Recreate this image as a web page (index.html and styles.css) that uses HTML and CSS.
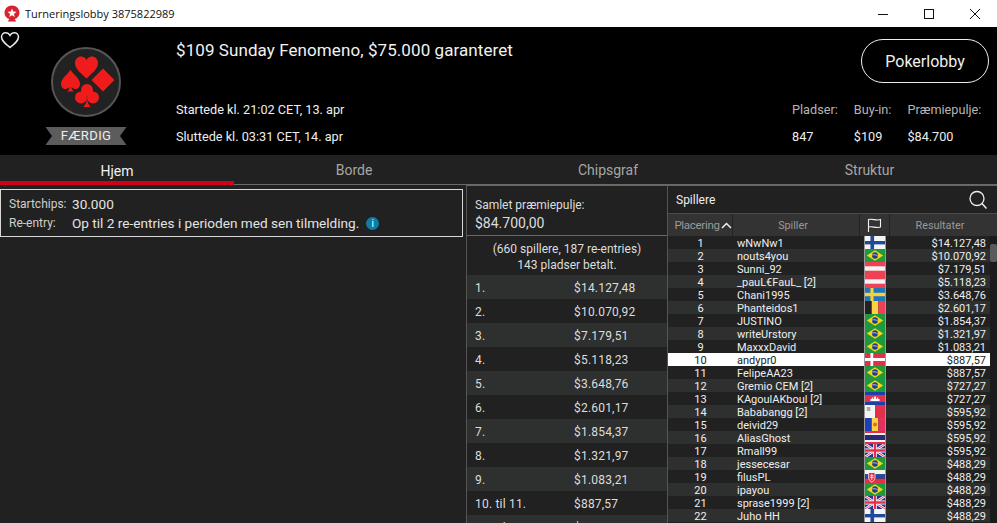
FILE: index.html
```html
<!DOCTYPE html>
<html lang="da">
<head>
<meta charset="utf-8">
<title>Turneringslobby 3875822989</title>
<link rel="stylesheet" href="styles.css">
</head>
<body>
<svg class="defs" width="0" height="0" aria-hidden="true">
  <defs>
    <symbol id="fi" viewBox="0 0 22 13" preserveAspectRatio="none"><rect width="22" height="13" fill="#f4f4f4"/><rect x="6" width="4" height="13" fill="#1f4a9c"/><rect y="5" width="22" height="3.4" fill="#1f4a9c"/></symbol>
    <symbol id="br" viewBox="0 0 22 13" preserveAspectRatio="none"><rect width="22" height="13" fill="#1e9a3c"/><path d="M11 1.2 20 6.5 11 11.8 2 6.5z" fill="#f7d417"/><circle cx="11" cy="6.5" r="3.2" fill="#1d3f8f"/><path d="M8 6c2-.6 4.300-.2 6 1" stroke="#fff" stroke-width=".7" fill="none"/></symbol>
    <symbol id="at" viewBox="0 0 22 13" preserveAspectRatio="none"><rect width="22" height="13" fill="#f4f4f4"/><rect width="22" height="4.300" fill="#ee4155"/><rect y="8.700" width="22" height="4.300" fill="#ee4155"/></symbol>
    <symbol id="se" viewBox="0 0 22 13" preserveAspectRatio="none"><rect width="22" height="13" fill="#1f77b8"/><rect x="6" width="3.400" height="13" fill="#fbcf3a"/><rect y="4.800" width="22" height="3.400" fill="#fbcf3a"/></symbol>
    <symbol id="be" viewBox="0 0 22 13" preserveAspectRatio="none"><rect width="7.400" height="13" fill="#222"/><rect x="7.400" width="7.300" height="13" fill="#fbd13f"/><rect x="14.700" width="7.300" height="13" fill="#ee4155"/></symbol>
    <symbol id="dk" viewBox="0 0 22 13" preserveAspectRatio="none"><rect width="22" height="13" fill="#e3304a"/><rect x="6" width="3" height="13" fill="#fff"/><rect y="5" width="22" height="3" fill="#fff"/></symbol>
    <symbol id="kh" viewBox="0 0 22 13" preserveAspectRatio="none"><rect width="22" height="13" fill="#e3304a"/><rect width="22" height="3" fill="#1f3fa8"/><rect y="10" width="22" height="3" fill="#1f3fa8"/><path d="M6 9V7h1.500V5.500h1.500V7h1V4.500h2V7h1V5.500h1.500V7H16v2z" fill="#fff"/></symbol>
    <symbol id="mt" viewBox="0 0 22 13" preserveAspectRatio="none"><rect width="11" height="13" fill="#f4f4f4"/><rect x="11" width="11" height="13" fill="#e3304a"/><rect x="2" y="2" width="4" height="4" fill="#aaa"/></symbol>
    <symbol id="md" viewBox="0 0 22 13" preserveAspectRatio="none"><rect width="7.400" height="13" fill="#1f3fb8"/><rect x="7.400" width="7.300" height="13" fill="#fbd13f"/><rect x="14.700" width="7.300" height="13" fill="#e3305f"/><circle cx="11" cy="6.500" r="2" fill="#d9671f"/></symbol>
    <symbol id="th" viewBox="0 0 22 13" preserveAspectRatio="none"><rect width="22" height="13" fill="#f4f4f4"/><rect width="22" height="2" fill="#e3304a"/><rect y="4" width="22" height="5" fill="#2a2a6e"/><rect y="11" width="22" height="2" fill="#e3304a"/></symbol>
    <symbol id="gb" viewBox="0 0 22 13" preserveAspectRatio="none"><rect width="22" height="13" fill="#28358a"/><path d="M0 0 22 13M22 0 0 13" stroke="#fff" stroke-width="2.600"/><path d="M0 0 22 13M22 0 0 13" stroke="#e3304a" stroke-width="1"/><path d="M11 0V13M0 6.500H22" stroke="#fff" stroke-width="4"/><path d="M11 0V13M0 6.500H22" stroke="#e3304a" stroke-width="2.400"/></symbol>
    <symbol id="sk" viewBox="0 0 22 13" preserveAspectRatio="none"><rect width="22" height="4.300" fill="#f4f4f4"/><rect y="4.300" width="22" height="4.400" fill="#1f4aa8"/><rect y="8.700" width="22" height="4.300" fill="#e3304a"/><path d="M4 2.500H11V8C11 10 8.500 11.500 7.500 12 6.500 11.500 4 10 4 8z" fill="#e3304a" stroke="#fff" stroke-width=".8"/><path d="M7.500 4V10M6 5.500H9M5.500 7.300H9.500" stroke="#fff" stroke-width=".8"/></symbol>
  </defs>
</svg>

<div class="window">
  <div class="titlebar">
    <svg class="app-logo" width="16" height="17" viewBox="0 0 16 17"><path d="M8 0.500C3.800.5.500 3.600.500 7.800c0 3.100 2 5.500 4.800 6.300L3.800 16.500h8.400l-1.500-2.400c2.800-.8 4.800-3.200 4.800-6.300C15.500 3.600 12.200.5 8 .5z" fill="#d9232e"/><path d="M8 3.500 9.200 6.600 12.500 6.800 9.900 8.900 10.800 12 8 10.200 5.200 12 6.100 8.900 3.500 6.800 6.800 6.600z" fill="#fff"/></svg>
    <span class="title-text">Turneringslobby 3875822989</span>
    <div class="win-controls">
      <svg class="win-btn" width="12" height="12" viewBox="0 0 12 12"><path d="M1 6.500H11" stroke="#111" stroke-width="1"/></svg>
      <svg class="win-btn" width="12" height="12" viewBox="0 0 12 12"><rect x="1.500" y="1.500" width="9" height="9" fill="none" stroke="#111"/></svg>
      <svg class="win-btn" width="12" height="12" viewBox="0 0 12 12"><path d="M1 1 11 11M11 1 1 11" stroke="#111" stroke-width="1"/></svg>
    </div>
  </div>

  <header class="hero">
    <svg class="heart" width="20" height="18" viewBox="0 0 20 18"><path d="M10 16.500C5 12.500 1.500 9.800 1.500 6 1.500 3.500 3.400 1.700 5.600 1.700 7.500 1.700 9 2.700 10 4.500 11 2.700 12.500 1.700 14.400 1.700 16.600 1.700 18.500 3.500 18.500 6 18.500 9.800 15 12.500 10 16.500z" fill="none" stroke="#e8e8e8" stroke-width="1.500"/></svg>
    <div class="badge-col">
      <svg class="suits" width="72" height="72" viewBox="0 0 72 72">
        <circle cx="36" cy="36" r="34" fill="#222" stroke="#555" stroke-width="2"/>
        <path d="M36.500 32.500C29.500 26 25 22.500 25 17 25 13 28 10.500 31 10.500 33.500 10.500 35.500 12 36.500 14 37.500 12 39.500 10.500 42 10.500 45 10.500 48 13 48 17 48 22.500 43.500 26 36.500 32.500z" fill="#f01b1b"/>
        <path d="M20.500 24C17 29 11 32.500 11 38 11 41 13 43 15.500 43 17 43 18.500 42.200 19.500 41 19.300 43 18.500 44.500 17 45.500H24C22.500 44.500 21.700 43 21.500 41 22.500 42.200 24 43 25.500 43 28 43 30 41 30 38 30 32.500 24 29 20.500 24z" fill="#f01b1b"/>
        <path d="M53 22.500 64.500 34 53 45.500 41.500 34z" fill="#f01b1b"/>
        <g fill="#f01b1b">
          <circle cx="37" cy="44" r="6"/>
          <circle cx="31" cy="51.500" r="6"/>
          <circle cx="43" cy="51.500" r="6"/>
          <path d="M37 48C37 55 36 59 33 61H41C38 59 37 55 37 48z"/>
        </g>
      </svg>
      <div class="ribbon">FÆRDIG</div>
    </div>
    <div class="hero-main">
      <h1 class="hero-title">$109 Sunday Fenomeno, $75.000 garanteret</h1>
      <div class="hero-dates">
        <div>Startede kl. 21:02 CET, 13. apr</div>
        <div>Sluttede kl. 03:31 CET, 14. apr</div>
      </div>
    </div>
    <div class="hero-side">
      <button class="lobby-btn">Pokerlobby</button>
      <div class="stats">
        <div class="stat"><span class="stat-label">Pladser:</span><span>847</span></div>
        <div class="stat"><span class="stat-label">Buy-in:</span><span>$109</span></div>
        <div class="stat"><span class="stat-label">Præmiepulje:</span><span>$84.700</span></div>
      </div>
    </div>
  </header>

  <nav class="tabs">
    <div class="tab active">Hjem</div>
    <div class="tab tab-borde">Borde</div>
    <div class="tab tab-chips">Chipsgraf</div>
    <div class="tab tab-struktur">Struktur</div>
  </nav>

  <main class="content">
    <section class="home">
      <div class="info-box">
        <div class="info-row"><span class="info-label">Startchips:</span><span class="info-value">30.000</span></div>
        <div class="info-row"><span class="info-label">Re-entry:</span><span class="info-value">Op til 2 re-entries i perioden med sen tilmelding.</span><span class="info-dot">i</span></div>
      </div>
    </section>

    <section class="prizes">
      <div class="prize-head">
        <div class="prize-head-label">Samlet præmiepulje:</div>
        <div class="prize-head-value">$84.700,00</div>
      </div>
      <div class="prize-summary">
        <div>(660 spillere, 187 re-entries)</div>
        <div>143 pladser betalt.</div>
      </div>
      <div class="prize-row"><span class="prize-place">1.</span><span>$14.127,48</span></div>
      <div class="prize-row"><span class="prize-place">2.</span><span>$10.070,92</span></div>
      <div class="prize-row"><span class="prize-place">3.</span><span>$7.179,51</span></div>
      <div class="prize-row"><span class="prize-place">4.</span><span>$5.118,23</span></div>
      <div class="prize-row"><span class="prize-place">5.</span><span>$3.648,76</span></div>
      <div class="prize-row"><span class="prize-place">6.</span><span>$2.601,17</span></div>
      <div class="prize-row"><span class="prize-place">7.</span><span>$1.854,37</span></div>
      <div class="prize-row"><span class="prize-place">8.</span><span>$1.321,97</span></div>
      <div class="prize-row"><span class="prize-place">9.</span><span>$1.083,21</span></div>
      <div class="prize-row"><span class="prize-place">10. til 11.</span><span>$887,57</span></div>
      <div class="prize-row"><span class="prize-place">12. til 13.</span><span>$727,27</span></div>
    </section>

    <section class="players">
      <div class="players-head">
        <span>Spillere</span>
        <svg width="20" height="20" viewBox="0 0 20 20"><circle cx="9" cy="8.500" r="7" fill="none" stroke="#eee" stroke-width="1.300"/><path d="M14 13.500 18.500 18.500" stroke="#eee" stroke-width="1.500"/></svg>
      </div>
      <div class="cols">
        <div class="col col-place">Placering<svg width="11" height="7" viewBox="0 0 11 7"><path d="M1 6 5.500 1.500 10 6" fill="none" stroke="#eee" stroke-width="1.500"/></svg></div>
        <div class="col col-name">Spiller</div>
        <div class="col col-flag"><svg width="15" height="14" viewBox="0 0 15 14"><path d="M1.500 14V1.500C5 .5 10 3 13.500 1.500V9C10 10.500 5 8 1.500 9" fill="none" stroke="#f2f2f2" stroke-width="1.100"/></svg></div>
        <div class="col col-res">Resultater</div>
      </div>
      <div class="list">
        <div class="rows">
          <div class="row"><span class="c-place">1</span><span class="c-name">wNwNw1</span><svg class="flag"><use href="#fi"/></svg><span class="c-res">$14.127,48</span></div>
          <div class="row"><span class="c-place">2</span><span class="c-name">nouts4you</span><svg class="flag"><use href="#br"/></svg><span class="c-res">$10.070,92</span></div>
          <div class="row"><span class="c-place">3</span><span class="c-name">Sunni_92</span><svg class="flag"><use href="#at"/></svg><span class="c-res">$7.179,51</span></div>
          <div class="row"><span class="c-place">4</span><span class="c-name">_pauL€FauL_ [2]</span><svg class="flag"><use href="#at"/></svg><span class="c-res">$5.118,23</span></div>
          <div class="row"><span class="c-place">5</span><span class="c-name">Chani1995</span><svg class="flag"><use href="#se"/></svg><span class="c-res">$3.648,76</span></div>
          <div class="row"><span class="c-place">6</span><span class="c-name">Phanteidos1</span><svg class="flag"><use href="#be"/></svg><span class="c-res">$2.601,17</span></div>
          <div class="row"><span class="c-place">7</span><span class="c-name">JUSTINO</span><svg class="flag"><use href="#br"/></svg><span class="c-res">$1.854,37</span></div>
          <div class="row"><span class="c-place">8</span><span class="c-name">writeUrstory</span><svg class="flag"><use href="#br"/></svg><span class="c-res">$1.321,97</span></div>
          <div class="row"><span class="c-place">9</span><span class="c-name">MaxxxDavid</span><svg class="flag"><use href="#br"/></svg><span class="c-res">$1.083,21</span></div>
          <div class="row me"><span class="c-place">10</span><span class="c-name">andypr0</span><svg class="flag"><use href="#dk"/></svg><span class="c-res">$887,57</span></div>
          <div class="row"><span class="c-place">11</span><span class="c-name">FelipeAA23</span><svg class="flag"><use href="#br"/></svg><span class="c-res">$887,57</span></div>
          <div class="row"><span class="c-place">12</span><span class="c-name">Gremio CEM [2]</span><svg class="flag"><use href="#br"/></svg><span class="c-res">$727,27</span></div>
          <div class="row"><span class="c-place">13</span><span class="c-name">KAgoulAKboul [2]</span><svg class="flag"><use href="#kh"/></svg><span class="c-res">$727,27</span></div>
          <div class="row"><span class="c-place">14</span><span class="c-name">Bababangg [2]</span><svg class="flag"><use href="#mt"/></svg><span class="c-res">$595,92</span></div>
          <div class="row"><span class="c-place">15</span><span class="c-name">deivid29</span><svg class="flag"><use href="#md"/></svg><span class="c-res">$595,92</span></div>
          <div class="row"><span class="c-place">16</span><span class="c-name">AliasGhost</span><svg class="flag"><use href="#th"/></svg><span class="c-res">$595,92</span></div>
          <div class="row"><span class="c-place">17</span><span class="c-name">Rmall99</span><svg class="flag"><use href="#gb"/></svg><span class="c-res">$595,92</span></div>
          <div class="row"><span class="c-place">18</span><span class="c-name">jessecesar</span><svg class="flag"><use href="#br"/></svg><span class="c-res">$488,29</span></div>
          <div class="row"><span class="c-place">19</span><span class="c-name">filusPL</span><svg class="flag"><use href="#sk"/></svg><span class="c-res">$488,29</span></div>
          <div class="row"><span class="c-place">20</span><span class="c-name">ipayou</span><svg class="flag"><use href="#br"/></svg><span class="c-res">$488,29</span></div>
          <div class="row"><span class="c-place">21</span><span class="c-name">sprase1999 [2]</span><svg class="flag"><use href="#gb"/></svg><span class="c-res">$488,29</span></div>
          <div class="row"><span class="c-place">22</span><span class="c-name">Juho HH</span><svg class="flag"><use href="#fi"/></svg><span class="c-res">$488,29</span></div>
        </div>
        <div class="scrollbar"><div class="thumb"></div></div>
      </div>
    </section>
  </main>
</div>
</body>
</html>
```

FILE: styles.css
```css
* { box-sizing: border-box; }
html, body { margin: 0; padding: 0; height: 100%; overflow: hidden; }
body { font-family: Roboto, "Liberation Sans", sans-serif; background: #212121; color: #eee; }
.defs { position: absolute; }
.window { width: 997px; height: 523px; display: flex; flex-direction: column; overflow: hidden; }

.titlebar { height: 27px; flex: none; background: #fff; color: #111; display: flex; align-items: center; padding-left: 4px; font: 11px "Open Sans", "Liberation Sans", sans-serif; }
.app-logo { margin-right: 5px; }
.win-controls { margin-left: auto; display: flex; gap: 34px; padding-right: 16px; }

.hero { height: 128px; flex: none; background: #000; display: flex; position: relative; }
.heart { position: absolute; left: 0; top: 4px; }
.badge-col { width: 176px; flex: none; padding: 19px 4px 0 0; display: flex; flex-direction: column; align-items: center; gap: 9px; }
.suits { display: block; flex: none; }
.ribbon { width: 81px; height: 18px; background: #5c5c5c; color: #eee; font-size: 13px; line-height: 18px; text-align: center; letter-spacing: .4px; clip-path: polygon(0 0, 100% 0, 92% 50%, 100% 100%, 0 100%, 8% 50%); }
.hero-main { flex: 1; padding-top: 13px; }
.hero-title { margin: 0; font-size: 17px; font-weight: 400; line-height: 20px; letter-spacing: .08px; color: #f2f2f2; }
.hero-dates { margin-top: 36px; font-size: 12.7px; line-height: 27px; color: #eee; }
.hero-side { width: 205px; flex: none; display: flex; flex-direction: column; align-items: flex-end; padding: 12px 12px 0 0; }
.lobby-btn { width: 128px; height: 44px; border: 1px solid #eee; border-radius: 22px; background: #000; color: #f0f0f0; font: 16px Roboto, sans-serif; margin-right: -4px; }
.stats { display: flex; gap: 16px; margin-top: 13px; font-size: 12.7px; line-height: 27px; color: #eee; align-self: flex-start; }
.stat { display: flex; flex-direction: column; }
.stat-label { color: #b5b5b5; }

.tabs { height: 30px; flex: none; display: flex; background: #212121; }
.tab { border-bottom: 1px solid #6a6a6a; text-align: center; font-size: 14px; line-height: 31px; color: #a6a6a6; }
.tab.active { width: 234px; flex: none; color: #f2f2f2; border-bottom: 4px solid #d0021b; line-height: 33px; }
.tab-borde { width: 240px; flex: none; }
.tab-chips { width: 268px; flex: none; }
.tab-struktur { flex: 1; }

.content { flex: 1; display: flex; min-height: 0; }
.home { width: 466px; flex: none; padding: 4px 3px 0 0; }
.info-box { height: 48px; border: 1px solid #d8d8d8; padding: 5px 8px; font-size: 12px; line-height: 19px; }
.info-row { display: flex; align-items: center; }
.info-label { width: 63px; color: #cfcfcf; }
.info-value { font-size: 13.6px; color: #e4e4e4; }
.info-dot { width: 13px; height: 13px; border-radius: 50%; background: #0d7da5; color: #fff; font-size: 10px; line-height: 13px; text-align: center; margin-left: 7px; }

.prizes { width: 202px; flex: none; border-left: 1px solid #555; border-right: 1px solid #555; border-top: 1px solid #666; overflow: hidden; }
.prize-head { height: 50px; padding: 11px 8px 0; border-bottom: 1px solid #666; }
.prize-head-label { font-size: 12px; line-height: 17px; color: #ddd; }
.prize-head-value { font-size: 14px; line-height: 18px; color: #ddd; }
.prize-summary { height: 39px; padding-top: 5px; text-align: center; font-size: 12px; line-height: 16px; color: #ddd; }
.prize-row { height: 24px; display: flex; align-items: center; padding: 1px 0 0 8px; font-size: 12px; color: #ddd; letter-spacing: .2px; }
.prize-row:nth-child(odd) { background: #2e302f; }
.prize-place { width: 99px; }

.players { flex: 1; min-width: 0; display: flex; flex-direction: column; border-top: 1px solid #666; }
.players-head { height: 28px; flex: none; display: flex; align-items: center; justify-content: space-between; padding: 0 9px 0 8px; font-size: 12px; color: #eee; border-bottom: 1px solid #4a4a4a; }
.cols { height: 22px; flex: none; display: flex; background: #333; font-size: 10.8px; color: #9a9a9a; }
.col { display: flex; align-items: center; justify-content: center; height: 100%; border-right: 1px solid #222; }
.col-place { width: 65px; gap: 1px; font-size: 11.500px; letter-spacing: -.3px; padding-left: 6px; }
.col-name { width: 127px; padding-right: 6px; }
.col-flag { width: 30px; }
.col-res { flex: 1; border-right: 0; padding-right: 7px; }
.list { flex: 1; min-height: 0; display: flex; overflow: hidden; }
.rows { flex: 1; min-width: 0; }
.row { height: 13px; display: flex; align-items: flex-start; font-size: 11px; color: #eee; overflow: hidden; }
.row span { line-height: 15px; height: 13px; }
.row:nth-child(even) { background: #2e302f; }
.row.me { background: #fff; color: #222; }
.c-place { width: 65px; text-align: center; }
.c-name { width: 131px; padding-left: 4px; flex: none; }
.flag { width: 20px; height: 13px; flex: none; margin: 0 1px; box-shadow: -1px 0 #999, 1px 0 #999; }
.c-res { flex: 1; text-align: right; padding-right: 4px; }
.scrollbar { width: 7px; flex: none; background: #1b1b1b; padding-top: 8px; }
.thumb { height: 18px; background: #5a5a5a; border-radius: 2px; }
```
